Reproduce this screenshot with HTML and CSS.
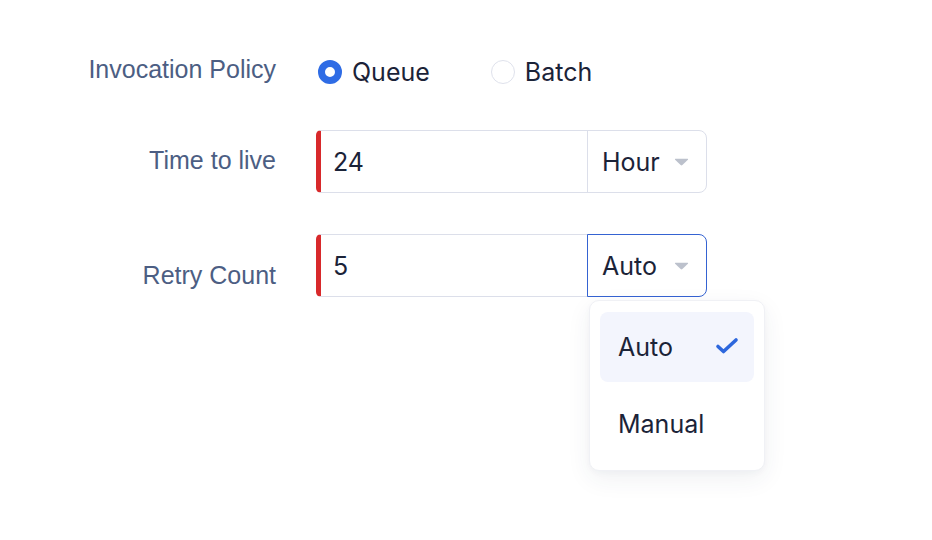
FILE: index.html
```html
<!DOCTYPE html>
<html lang="en">
<head>
<meta charset="utf-8">
<title>Invocation settings</title>
<link rel="stylesheet" href="styles.css">
</head>
<body>
<form class="form">
  <div class="row row-policy">
    <div class="label">Invocation Policy</div>
    <div class="control radios">
      <label class="radio"><span class="dot dot-on"></span><span class="radio-text">Queue</span></label>
      <label class="radio"><span class="dot"></span><span class="radio-text">Batch</span></label>
    </div>
  </div>

  <div class="row row-ttl">
    <div class="label">Time to live</div>
    <div class="control group">
      <div class="input">24</div>
      <div class="select">
        <span class="select-text">Hour</span>
        <svg class="caret" width="15" height="8" viewBox="0 0 15 8"><path d="M1.5 0.8 H13.5 Q14.6 0.8 13.9 1.7 L8.4 7.1 Q7.5 7.9 6.6 7.1 L1.1 1.7 Q0.4 0.8 1.5 0.8 Z" fill="#bcc1cc"/></svg>
      </div>
    </div>
  </div>

  <div class="row row-retry">
    <div class="label">Retry Count</div>
    <div class="control group">
      <div class="input">5</div>
      <div class="select select-open">
        <span class="select-text">Auto</span>
        <svg class="caret" width="15" height="8" viewBox="0 0 15 8"><path d="M1.5 0.8 H13.5 Q14.6 0.8 13.9 1.7 L8.4 7.1 Q7.5 7.9 6.6 7.1 L1.1 1.7 Q0.4 0.8 1.5 0.8 Z" fill="#bcc1cc"/></svg>
        <div class="menu">
          <div class="option option-active">
            <span>Auto</span>
            <svg class="check" width="24" height="18" viewBox="0 0 24 18"><path d="M3 9.5 L8.5 14.5 L21 3" fill="none" stroke="#2d67dd" stroke-width="3.6" stroke-linecap="round" stroke-linejoin="round"/></svg>
          </div>
          <div class="option"><span>Manual</span></div>
        </div>
      </div>
    </div>
  </div>
</form>
</body>
</html>
```

FILE: styles.css
```css
* { box-sizing: border-box; }

html, body {
  margin: 0;
  background: #ffffff;
}

body {
  width: 932px;
  height: 540px;
  overflow: hidden;
}

.form {
  display: flex;
  flex-direction: column;
  padding-top: 48px;
}

.row {
  display: flex;
  align-items: flex-start;
  gap: 40px;
}

.row-policy { height: 48px; margin-bottom: 34px; }
.row-ttl { height: 63px; margin-bottom: 41px; }
.row-retry { height: 63px; }

.label {
  width: 276px;
  flex: none;
  font-family: "Liberation Sans", Arial, sans-serif;
  font-size: 25px;
  line-height: 25px;
  color: #4c5e83;
  text-align: right;
  white-space: nowrap;
}

.row-policy .label { margin-top: 9px; }
.row-ttl .label { margin-top: 18px; }
.row-retry .label { margin-top: 29px; }

.control {
  font-family: Inter, "Noto Sans", sans-serif;
  font-size: 25px;
  color: #1b2338;
}

.radios {
  display: flex;
  align-items: center;
  height: 48px;
  padding-left: 2px;
  gap: 61px;
}

.radio {
  display: flex;
  align-items: center;
  gap: 10px;
}

.dot {
  width: 24px;
  height: 24px;
  border-radius: 50%;
  border: 1.5px solid #dfe2ec;
  background: #fff;
}

.dot-on {
  border: 7px solid #2f6ce5;
}

.group {
  display: flex;
  height: 63px;
}

.input {
  width: 272px;
  height: 63px;
  border: 1px solid #dcdfea;
  border-left: 5px solid #d8292b;
  border-radius: 5px 0 0 5px;
  padding-left: 12px;
  display: flex;
  align-items: center;
}

.select {
  position: relative;
  width: 120px;
  height: 63px;
  margin-left: -1px;
  border: 1px solid #dcdfea;
  border-radius: 0 8px 8px 0;
  display: flex;
  align-items: center;
  justify-content: space-between;
  padding: 0 17px 0 14px;
}

.select-open {
  border-color: #3563d2;
  z-index: 1;
}

.caret { margin-top: 1px; }

.menu {
  position: absolute;
  top: 65px;
  left: 1px;
  width: 176px;
  padding: 11px 10px 11px;
  background: #fff;
  border: 1px solid #f0f1f5;
  border-radius: 10px;
  box-shadow: 0 8px 24px rgba(40, 50, 90, 0.07), 0 2px 6px rgba(40, 50, 90, 0.03);
  display: flex;
  flex-direction: column;
  gap: 7px;
}

.option {
  height: 70px;
  border-radius: 8px;
  display: flex;
  align-items: center;
  justify-content: space-between;
  padding: 0 15px 0 18px;
  color: #1b2338;
}

.option-active {
  background: #f3f5fd;
}

.check { margin-top: -2px; }
```
